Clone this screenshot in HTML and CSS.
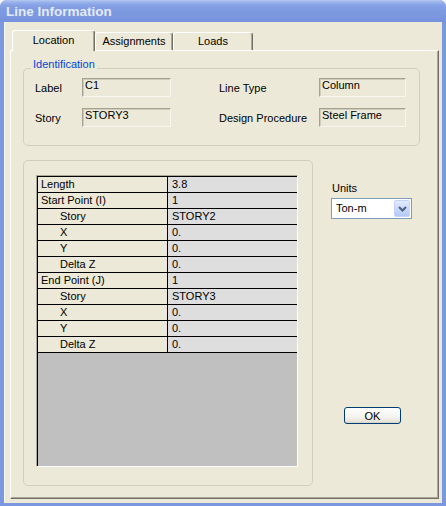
FILE: index.html
```html
<!DOCTYPE html>
<html>
<head>
<meta charset="utf-8">
<title>Line Information</title>
<link rel="stylesheet" href="styles.css">
</head>
<body>
<div class="window">
  <div class="titlebar"><span class="title">Line Information</span></div>
  <div class="client">
    <div class="tabs">
      <div class="tab tab-location active">Location</div>
      <div class="tab tab-assign">Assignments</div>
      <div class="tab tab-loads">Loads</div>
    </div>
    <div class="panel">
      <div class="group ident">
        <span class="legend">Identification</span>
        <div class="ident-grid">
          <span class="lbl">Label</span>
          <div class="field">C1</div>
          <span></span>
          <span class="lbl">Line Type</span>
          <div class="field">Column</div>
          <span class="lbl">Story</span>
          <div class="field">STORY3</div>
          <span></span>
          <span class="lbl">Design Procedure</span>
          <div class="field">Steel Frame</div>
        </div>
      </div>
      <div class="lower">
        <div class="group sheet-group">
          <div class="sheet">
            <div class="sheet-inner">
              <div class="row"><div class="c1">Length</div><div class="c2">3.8</div></div>
              <div class="row"><div class="c1">Start Point (I)</div><div class="c2">1</div></div>
              <div class="row"><div class="c1 sub">Story</div><div class="c2">STORY2</div></div>
              <div class="row"><div class="c1 sub">X</div><div class="c2">0.</div></div>
              <div class="row"><div class="c1 sub">Y</div><div class="c2">0.</div></div>
              <div class="row"><div class="c1 sub">Delta Z</div><div class="c2">0.</div></div>
              <div class="row"><div class="c1">End Point (J)</div><div class="c2">1</div></div>
              <div class="row"><div class="c1 sub">Story</div><div class="c2">STORY3</div></div>
              <div class="row"><div class="c1 sub">X</div><div class="c2">0.</div></div>
              <div class="row"><div class="c1 sub">Y</div><div class="c2">0.</div></div>
              <div class="row"><div class="c1 sub">Delta Z</div><div class="c2">0.</div></div>
              <div class="empty"></div>
            </div>
          </div>
        </div>
        <div class="side">
          <div class="units-label">Units</div>
          <div class="select">
            <span class="select-text">Ton-m</span>
            <span class="drop"><svg width="9" height="6" viewBox="0 0 9 6"><path d="M1 1 L4.5 4.5 L8 1" fill="none" stroke="#4d6185" stroke-width="2"/></svg></span>
          </div>
          <button class="ok">OK</button>
        </div>
      </div>
    </div>
  </div>
</div>
</body>
</html>
```
FILE: styles.css
```css
html, body {
  margin: 0;
  padding: 0;
}
body {
  width: 446px;
  height: 506px;
  overflow: hidden;
  background: #f4f4f4;
  font-family: "Liberation Sans", Arial, sans-serif;
  font-size: 11px;
  color: #000;
}
.window {
  width: 446px;
  height: 506px;
  display: flex;
  flex-direction: column;
  background: #7b97e0;
  border-radius: 7px 7px 0 0;
  overflow: hidden;
}
.titlebar {
  height: 22px;
  flex: none;
  box-sizing: border-box;
  padding-left: 6px;
  display: flex;
  align-items: center;
  background: linear-gradient(#b5c9f2 0px, #9cb4ec 2px, #87a2e5 5px, #7e9ae1 10px, #7a96df 17px, #7591dc 22px);
}
.title {
  color: #e3ebfb;
  font-weight: bold;
  font-size: 13.5px;
  padding-top: 1px;
}
.client {
  flex: 1;
  margin: 0 4px 3px 4px;
  background: #ece9d8;
  padding: 8px 3px 4px 6px;
  display: flex;
  flex-direction: column;
  box-shadow: inset 1px 0 0 #f6f5ef;
}
.tabs {
  height: 20px;
  flex: none;
  display: flex;
  align-items: flex-end;
  margin-left: 2px;
}
.tab {
  box-sizing: border-box;
  height: 18px;
  background: #ece9d8;
  border-top: 1px solid #fff;
  border-left: 1px solid #fff;
  border-right: 1px solid #716f64;
  box-shadow: inset -1px 0 0 #aca899;
  border-radius: 3px 3px 0 0;
  text-align: center;
  line-height: 17px;
}
.tab.active {
  height: 21px;
  margin-bottom: -1px;
  position: relative;
  z-index: 1;
  padding-top: 1px;
}
.tab-location { width: 83px; }
.tab-assign { width: 78px; }
.tab-loads { width: 80px; }
.panel {
  flex: 1;
  border: 1px solid;
  border-color: #fff #716f64 #716f64 #fff;
  box-shadow: inset -1px -1px 0 #aca899;
}
.group {
  box-sizing: border-box;
  border: 1px solid #d0d0bf;
  border-radius: 5px;
}
.ident {
  position: relative;
  margin: 17px 0 0 12px;
  width: 397px;
  height: 78px;
  padding: 9px 0 0 11px;
}
.legend {
  position: absolute;
  top: -11px;
  left: 7px;
  padding: 0 2px;
  background: #ece9d8;
  color: #0046d5;
  line-height: 13px;
}
.ident-grid {
  display: grid;
  grid-template-columns: 47px 89px 48px 100px 87px;
  grid-auto-rows: 19px;
  row-gap: 11px;
  align-items: center;
}
.lbl {
  line-height: 13px;
  padding-top: 1px;
}
.field {
  box-sizing: border-box;
  height: 19px;
  border: 1px solid;
  border-color: #a5a293 #f7f6f0 #f7f6f0 #a5a293;
  box-shadow: inset 1px 1px 0 #cfccbc;
  padding: 0 2px;
  line-height: 13px;
  white-space: nowrap;
  overflow: hidden;
}
.lower {
  display: flex;
  margin-top: 14px;
}
.sheet-group {
  margin-left: 12px;
  width: 290px;
  height: 326px;
  padding: 14px 0 0 12px;
}
.sheet {
  box-sizing: border-box;
  width: 262px;
  height: 292px;
  border: 1px solid;
  border-color: #aca899 #fff #fff #aca899;
}
.sheet-inner {
  box-sizing: border-box;
  height: 290px;
  border-top: 1px solid #000;
  border-left: 1px solid #000;
  display: flex;
  flex-direction: column;
}
.row {
  display: grid;
  grid-template-columns: 130px 129px;
  height: 16px;
  box-sizing: border-box;
  border-bottom: 1px solid #000;
  flex: none;
}
.c1, .c2 {
  line-height: 15px;
  white-space: nowrap;
  overflow: hidden;
}
.c1 {
  background: #ece9d8;
  border-right: 1px solid #000;
  padding-left: 3px;
}
.c1.sub {
  padding-left: 22px;
}
.c2 {
  background: #dedede;
  padding-left: 4px;
}
.empty {
  flex: 1;
  background: #c0c0c0;
}
.side {
  margin-left: 18px;
  display: flex;
  flex-direction: column;
  align-items: flex-start;
}
.units-label {
  margin-top: 22px;
  line-height: 13px;
  padding-left: 1px;
}
.select {
  margin-top: 3px;
  box-sizing: border-box;
  width: 81px;
  height: 21px;
  border: 1px solid #7f9db9;
  background: #fff;
  display: flex;
  align-items: center;
  justify-content: space-between;
  padding: 0 1px 0 4px;
}
.select-text {
  line-height: 13px;
}
.drop {
  box-sizing: border-box;
  width: 16px;
  height: 17px;
  border: 1px solid #c3d3fd;
  border-radius: 2px;
  background: linear-gradient(#e2ebfe, #c6d7fc 60%, #b4c9f7);
  display: flex;
  align-items: center;
  justify-content: center;
}
.ok {
  margin: 188px 0 0 13px;
  box-sizing: border-box;
  width: 57px;
  height: 17px;
  padding: 0;
  border: 1px solid #003c74;
  border-radius: 3px;
  background: linear-gradient(#ffffff, #f4f3ee 60%, #e6e3d8 90%, #d6d0c5);
  font-family: "Liberation Sans", Arial, sans-serif;
  font-size: 11px;
  color: #000;
  line-height: 14px;
}
```
